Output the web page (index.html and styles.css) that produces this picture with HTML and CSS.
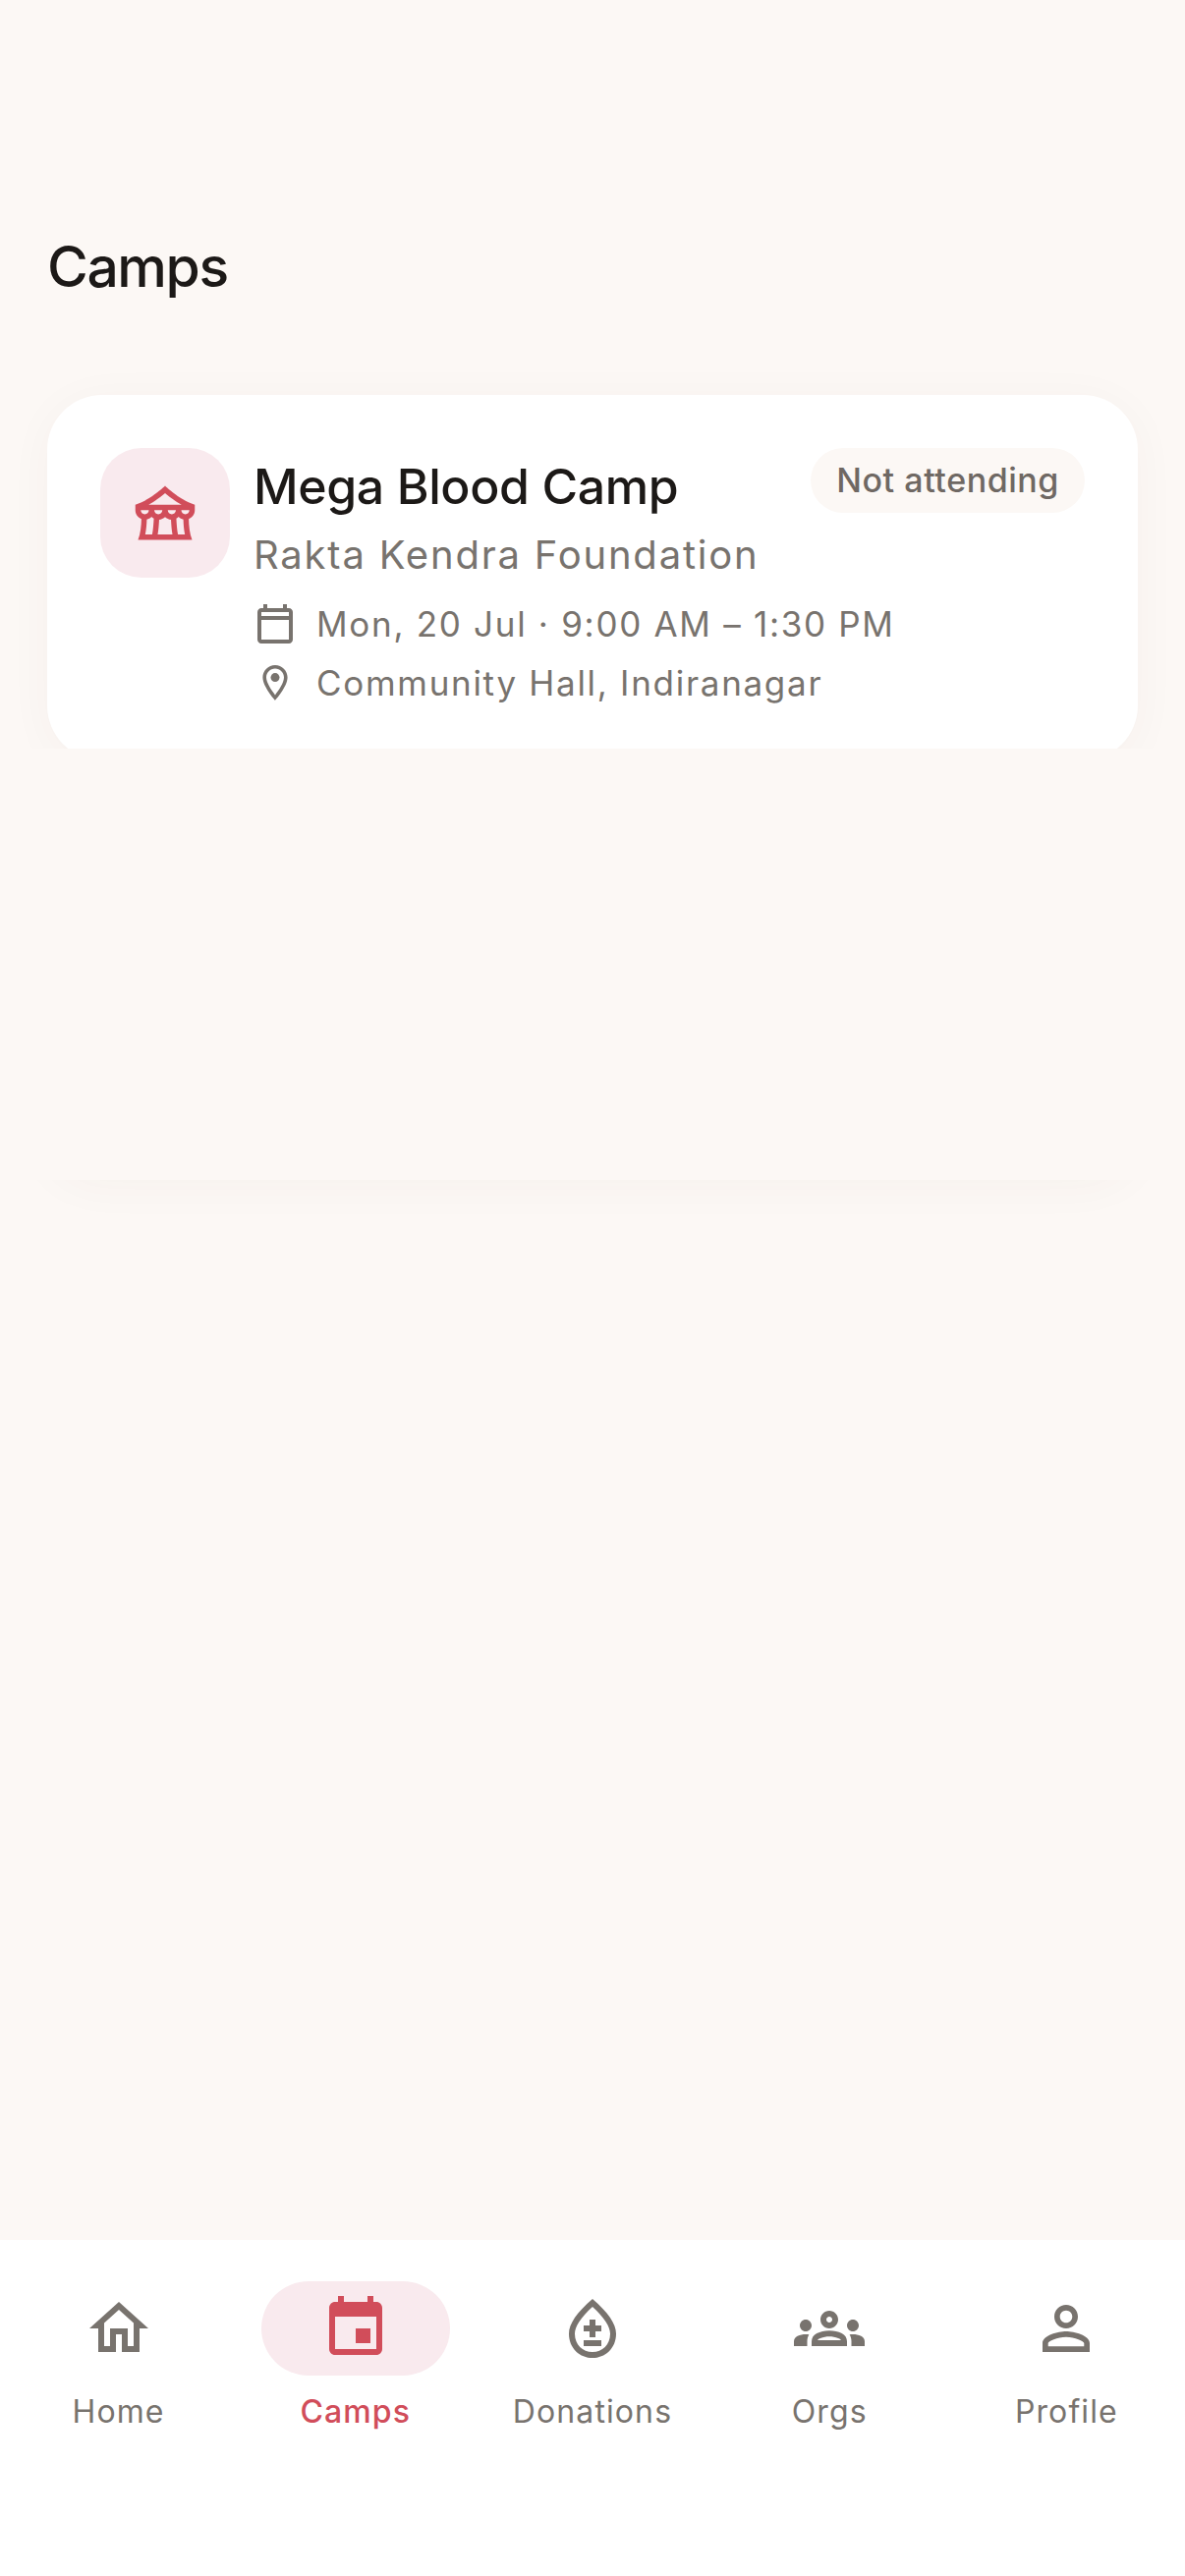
FILE: index.html
```html
<!DOCTYPE html>
<html lang="en">

<head>
  <meta charset="UTF-8">
  <meta name="viewport" content="width=device-width, initial-scale=1.0">
  <title>Camps</title>
  <link rel="stylesheet" href="styles.css">
</head>

<body>

  <main class="content">
    <h1 class="page-title">Camps</h1>

    <div class="card-clip">
      <div class="card">
        <div class="card-icon">
          <svg viewBox="0 0 24 24" width="66" height="66"><path d="M23,11V9c-6-2-11-7-11-7S7,7,1,9v2c0,1.49,0.93,2.75,2.24,3.26C3.2,16.76,2.92,19.69,2,22h20c-0.92-2.31-1.2-5.24-1.24-7.74C22.07,13.75,23,12.49,23,11z M12,4.71c1.33,1.14,3.49,2.84,6.11,4.29H5.89C8.51,7.55,10.67,5.85,12,4.71z M13,11h3c0,0.83-0.67,1.5-1.5,1.5S13,11.83,13,11z M9.5,12.5C8.67,12.5,8,11.83,8,11h3C11,11.83,10.33,12.5,9.5,12.5z M6,11c0,0.83-0.67,1.5-1.5,1.5S3,11.83,3,11H6z M4.66,20c0.39-1.86,0.54-3.82,0.57-5.58c0.68-0.15,1.29-0.49,1.76-0.98c0.25,0.25,0.54,0.47,0.85,0.64c-0.1,1.87-0.26,4.14-0.61,5.92H4.66z M9.27,20c0.3-1.73,0.45-3.63,0.54-5.5c0.83-0.02,1.6-0.36,2.19-0.94c0.59,0.58,1.36,0.92,2.19,0.94c0.09,1.87,0.24,3.77,0.54,5.5H9.27z M16.77,20c-0.35-1.78-0.51-4.05-0.61-5.92c0.31-0.17,0.6-0.39,0.85-0.64c0.47,0.49,1.08,0.83,1.76,0.98c0.03,1.76,0.18,3.72,0.57,5.58H16.77z M19.5,12.5c-0.83,0-1.5-0.67-1.5-1.5h3C21,11.83,20.33,12.5,19.5,12.5z"/></svg>
        </div>
        <div class="card-body">
          <div class="card-head">
            <h2 class="camp-name">Mega Blood Camp</h2>
            <span class="chip">Not attending</span>
          </div>
          <p class="camp-org">Rakta Kendra Foundation</p>
          <div class="meta">
            <svg viewBox="0 0 24 24" width="48" height="48"><path d="M19 4h-1V2h-2v2H8V2H6v2H5c-1.11 0-1.99.9-1.99 2L3 20c0 1.1.89 2 2 2h14c1.1 0 2-.9 2-2V6c0-1.1-.9-2-2-2zm0 16H5V10h14v10zm0-12H5V6h14v2z"/></svg>
            <span>Mon, 20 Jul · 9:00 AM – 1:30 PM</span>
          </div>
          <div class="meta">
            <svg viewBox="0 0 24 24" width="48" height="48"><g transform="translate(1.2 1.2) scale(.9)"><path d="M12 2C8.13 2 5 5.13 5 9c0 5.25 7 13 7 13s7-7.75 7-13c0-3.87-3.13-7-7-7zM7 9c0-2.76 2.24-5 5-5s5 2.24 5 5c0 2.88-2.88 7.19-5 9.88C9.92 16.21 7 11.85 7 9z"/><circle cx="12" cy="9" r="2.5"/></g></svg>
            <span>Community Hall, Indiranagar</span>
          </div>
        </div>
      </div>
    </div>

    <!-- the card's shadow shows again further down -->
    <div class="ghost-clip">
      <div class="ghost"></div>
    </div>
  </main>

  <nav class="tabs">
    <a class="tab">
      <span class="tab-icon">
        <svg viewBox="0 0 24 24" width="72" height="72"><path d="M12 5.69l5 4.5V18h-2v-6H9v6H7v-7.81l5-4.5M12 3L2 12h3v8h6v-6h2v6h6v-8h3L12 3z"/></svg>
      </span>
      <span class="tab-label">Home</span>
    </a>
    <a class="tab active">
      <span class="tab-icon">
        <svg viewBox="0 0 24 24" width="72" height="72"><path d="M17 12h-5v5h5v-5zM16 1v2H8V1H6v2H5c-1.11 0-1.99.9-1.99 2L3 19c0 1.1.89 2 2 2h14c1.1 0 2-.9 2-2V5c0-1.1-.9-2-2-2h-1V1h-2zm3 18H5V8h14v11z"/></svg>
      </span>
      <span class="tab-label">Camps</span>
    </a>
    <a class="tab">
      <span class="tab-icon">
        <svg viewBox="0 0 24 24" width="72" height="72"><path d="M12 2c-5.33 4.55-8 8.48-8 11.8 0 4.98 3.8 8.2 8 8.2s8-3.22 8-8.2C20 10.48 17.33 6.55 12 2zm0 18c-3.35 0-6-2.57-6-6.2 0-2.34 1.95-5.44 6-9.14 4.05 3.7 6 6.79 6 9.14 0 3.63-2.65 6.2-6 6.2zM9 16h6v2H9zM11 9v2H9v2h2v2h2v-2h2v-2h-2V9z"/></svg>
      </span>
      <span class="tab-label">Donations</span>
    </a>
    <a class="tab">
      <span class="tab-icon">
        <svg viewBox="0 0 24 24" width="72" height="72"><path d="M4 13c1.1 0 2-.9 2-2 0-1.1-.9-2-2-2s-2 .9-2 2c0 1.1.9 2 2 2zm1.13 1.1C4.76 14.04 4.39 14 4 14c-.99 0-1.93.21-2.78.58C.48 14.9 0 15.62 0 16.43V18h4.5v-1.61c0-.83.23-1.61.63-2.29zM20 13c1.1 0 2-.9 2-2 0-1.1-.9-2-2-2s-2 .9-2 2c0 1.1.9 2 2 2zm4 3.43c0-.81-.48-1.53-1.22-1.85C21.93 14.21 20.99 14 20 14c-.39 0-.76.04-1.13.1.4.68.63 1.46.63 2.29V18H24v-1.57zM16.24 13.65c-1.17-.52-2.61-.9-4.24-.9-1.63 0-3.07.39-4.24.9C6.68 14.13 6 15.21 6 16.39V18h12v-1.61c0-1.18-.68-2.26-1.76-2.74zM8.07 16c.09-.23.13-.39.91-.69.97-.38 1.99-.56 3.02-.56s2.05.18 3.02.56c.77.3.81.46.91.69H8.07zM12 8c.55 0 1 .45 1 1s-.45 1-1 1-1-.45-1-1 .45-1 1-1m0-2c-1.66 0-3 1.34-3 3s1.34 3 3 3 3-1.34 3-3-1.34-3-3-3z"/></svg>
      </span>
      <span class="tab-label">Orgs</span>
    </a>
    <a class="tab">
      <span class="tab-icon">
        <svg viewBox="0 0 24 24" width="72" height="72"><path d="M12 5.9c1.16 0 2.1.94 2.1 2.1s-.94 2.1-2.1 2.1S9.9 9.16 9.9 8s.94-2.1 2.1-2.1m0 9c2.97 0 6.1 1.46 6.1 2.1v1.1H5.9V17c0-.64 3.13-2.1 6.1-2.1M12 4C9.79 4 8 5.79 8 8s1.79 4 4 4 4-1.79 4-4-1.79-4-4-4zm0 9c-2.67 0-8 1.34-8 4v3h16v-3c0-2.66-5.33-4-8-4z"/></svg>
      </span>
      <span class="tab-label">Profile</span>
    </a>
  </nav>

</body>

</html>
```

FILE: styles.css
```css
* {
  box-sizing: border-box;
}

html,
body {
  height: 100%;
}

body {
  margin: 0;
  display: flex;
  flex-direction: column;
  background-color: #fcf8f5;
  color: #1c1917;
  font-family: Inter, "Liberation Sans", sans-serif;
}

.content {
  flex: 1;
  min-height: 0;
}

.page-title {
  margin: 0;
  padding: 236px 48px 0;
  height: 330px;
  font-size: 57px;
  line-height: 72px;
  font-weight: 500;
  letter-spacing: -1.4px;
}

.card-clip {
  height: 432px;
  padding: 72px 48px 0;
  overflow: hidden;
}

.card {
  display: flex;
  gap: 22px;
  height: 372px;
  padding: 54px;
  border-radius: 56px;
  background-color: #fff;
  box-shadow: 0 6px 48px rgba(90, 60, 40, .035);
}

.card-icon {
  flex: none;
  display: flex;
  align-items: center;
  justify-content: center;
  width: 132px;
  height: 132px;
  border-radius: 42px;
  background-color: #f9eaee;
}

.card-icon svg {
  fill: #d14d5a;
}

.card-body {
  flex: 1;
}

.card-head {
  display: flex;
  justify-content: space-between;
  align-items: flex-start;
  height: 76px;
}

.camp-name {
  margin: 9px 0 0 2px;
  font-size: 50px;
  line-height: 60px;
  font-weight: 500;
  letter-spacing: -.4px;
}

.chip {
  height: 66px;
  padding: 0 26px;
  border-radius: 33px;
  background-color: #fcf8f5;
  color: #6f6863;
  font-size: 34px;
  line-height: 66px;
  font-weight: 500;
  letter-spacing: .55px;
}

.camp-org {
  margin: 2px 0 9px 2px;
  color: #78736e;
  font-size: 40px;
  line-height: 62px;
  letter-spacing: 1.8px;
}

.meta {
  display: flex;
  align-items: center;
  gap: 18px;
  height: 60px;
  color: #78736e;
  font-size: 35px;
  letter-spacing: 1.7px;
}

.meta svg {
  flex: none;
  fill: #78736e;
}

.ghost-clip {
  height: 90px;
  margin-top: 439px;
  padding: 0 48px;
  overflow: hidden;
}

.ghost {
  height: 100px;
  margin-top: -100px;
  border-radius: 56px;
  box-shadow: 0 6px 48px rgba(90, 60, 40, .035);
}

.tabs {
  flex: none;
  display: grid;
  grid-template-columns: repeat(5, 1fr);
  height: 342px;
  padding-top: 42px;
  background-color: #fff;
}

.tab {
  display: flex;
  flex-direction: column;
  align-items: center;
  color: #78736e;
}

.tab-icon {
  display: flex;
  align-items: center;
  justify-content: center;
  width: 192px;
  height: 96px;
  border-radius: 48px;
}

.tab-icon svg {
  fill: #78736e;
}

.tab-label {
  margin-top: 17px;
  font-size: 32px;
  line-height: 40px;
  letter-spacing: 1.1px;
}

.tab.active {
  color: #d14d5a;
}

.tab.active .tab-icon {
  background-color: #f9eaee;
}

.tab.active .tab-icon svg {
  fill: #d14d5a;
}

.tab.active .tab-label {
  font-weight: 500;
}
```
